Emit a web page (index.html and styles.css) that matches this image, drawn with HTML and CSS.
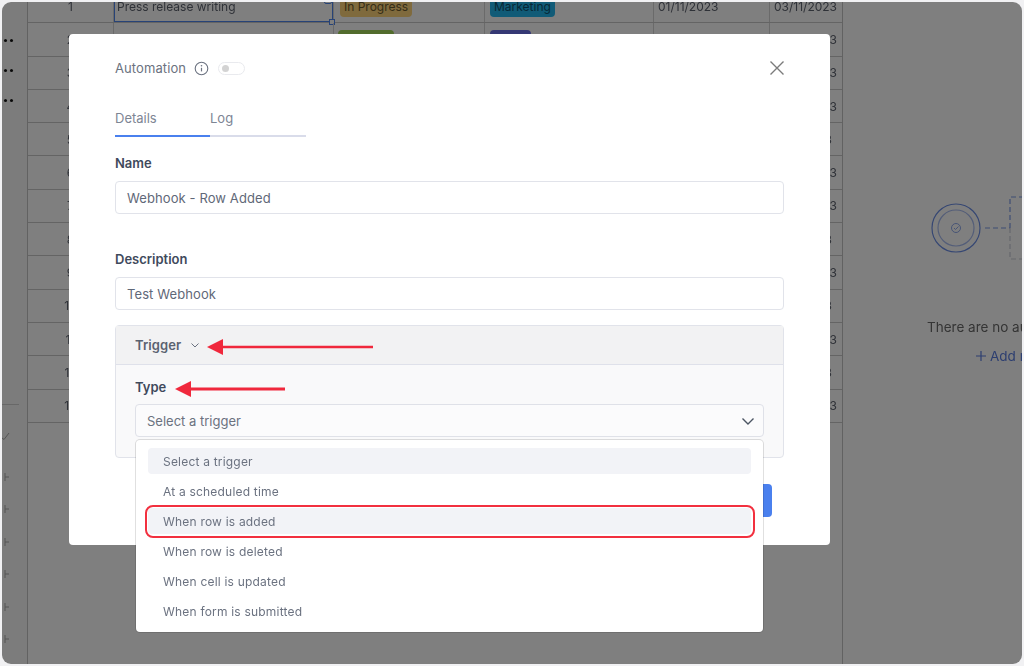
FILE: index.html
```html
<!DOCTYPE html>
<html lang="en">
<head>
<meta charset="utf-8">
<title>Automation</title>
<link rel="stylesheet" href="styles.css">
</head>
<body>
<div class="window">
  <aside class="sidebar">
    <div class="dots"><i></i><i></i></div>
    <div class="dots"><i></i><i></i></div>
    <div class="dots"><i></i><i></i></div>
    <div class="side-line"></div>
    <svg class="side-check" width="8" height="8" viewBox="0 0 8 8"><path d="M0 6l2 1.5L7 1" fill="none" stroke="#aaa" stroke-width="1"/></svg>
    <div class="side-tools">
      <svg width="8" height="8" viewBox="0 0 8 8"><path d="M3 0v8M3 4h4" stroke="#aaa" stroke-width="1" fill="none"/></svg>
      <svg width="8" height="8" viewBox="0 0 8 8"><path d="M3 0v8M3 4h4" stroke="#aaa" stroke-width="1" fill="none"/></svg>
      <svg width="8" height="8" viewBox="0 0 8 8"><path d="M3 0v8M3 4h4" stroke="#aaa" stroke-width="1" fill="none"/></svg>
      <svg width="8" height="8" viewBox="0 0 8 8"><path d="M3 0v8M3 4h4" stroke="#aaa" stroke-width="1" fill="none"/></svg>
      <svg width="8" height="8" viewBox="0 0 8 8"><path d="M3 0v8M3 4h4" stroke="#aaa" stroke-width="1" fill="none"/></svg>
      <svg width="8" height="8" viewBox="0 0 8 8"><path d="M3 0v8M3 4h4" stroke="#aaa" stroke-width="1" fill="none"/></svg>
    </div>
  </aside>

  <main class="sheet">
    <div class="row">
      <div class="cell num">1</div>
      <div class="cell name selected">Press release writing<i class="handle"></i><i class="handle-top"></i></div>
      <div class="cell"><span class="pill tan">In Progress</span></div>
      <div class="cell"><span class="pill cyan">Marketing</span></div>
      <div class="cell">01/11/2023</div>
      <div class="cell">03/11/2023</div>
    </div>
    <div class="row">
      <div class="cell num">2</div><div class="cell name"></div>
      <div class="cell"><span class="pill green">On Hold</span></div>
      <div class="cell"><span class="pill violet">Sales</span></div>
      <div class="cell">01/11/2023</div><div class="cell">05/11/2023</div>
    </div>
    <div class="row"><div class="cell num">3</div><div class="cell name"></div><div class="cell"></div><div class="cell"></div><div class="cell">01/11/2023</div><div class="cell">03/11/2023</div></div>
    <div class="row"><div class="cell num">4</div><div class="cell name"></div><div class="cell"></div><div class="cell"></div><div class="cell">01/11/2023</div><div class="cell">03/11/2023</div></div>
    <div class="row"><div class="cell num">5</div><div class="cell name"></div><div class="cell"></div><div class="cell"></div><div class="cell">01/11/2023</div><div class="cell">11/11/2023</div></div>
    <div class="row"><div class="cell num">6</div><div class="cell name"></div><div class="cell"></div><div class="cell"></div><div class="cell">01/11/2023</div><div class="cell">03/11/2023</div></div>
    <div class="row"><div class="cell num">7</div><div class="cell name"></div><div class="cell"></div><div class="cell"></div><div class="cell">01/11/2023</div><div class="cell">03/11/2023</div></div>
    <div class="row"><div class="cell num">8</div><div class="cell name"></div><div class="cell"></div><div class="cell"></div><div class="cell">01/11/2023</div><div class="cell">11/11/2023</div></div>
    <div class="row"><div class="cell num">9</div><div class="cell name"></div><div class="cell"></div><div class="cell"></div><div class="cell">01/11/2023</div><div class="cell">03/11/2023</div></div>
    <div class="row"><div class="cell num">10</div><div class="cell name"></div><div class="cell"></div><div class="cell"></div><div class="cell">01/11/2023</div><div class="cell">11/11/2023</div></div>
    <div class="row"><div class="cell num">11</div><div class="cell name"></div><div class="cell"></div><div class="cell"></div><div class="cell">01/11/2023</div><div class="cell">03/11/2023</div></div>
    <div class="row"><div class="cell num">12</div><div class="cell name"></div><div class="cell"></div><div class="cell"></div><div class="cell">01/11/2023</div><div class="cell">11/11/2023</div></div>
    <div class="row"><div class="cell num">13</div><div class="cell name"></div><div class="cell"></div><div class="cell"></div><div class="cell">01/11/2023</div><div class="cell">03/11/2023</div></div>
  </main>

  <section class="panel">
    <svg class="panel-art" width="180" height="68" viewBox="0 0 180 68">
      <circle cx="114" cy="33" r="24" fill="none" stroke="#6d8fe6" stroke-width="1.2"/>
      <circle cx="114" cy="33" r="18" fill="none" stroke="#a9bcf0" stroke-width="1.2"/>
      <circle cx="114" cy="33" r="4.5" fill="none" stroke="#8fa8ec" stroke-width="1"/>
      <path d="M112 33l1.5 1.5 3-3" fill="none" stroke="#8fa8ec" stroke-width="1"/>
      <path d="M143 33h25" fill="none" stroke="#7d9ae8" stroke-width="1.2" stroke-dasharray="5 3"/>
      <path d="M168 33V2h12" fill="none" stroke="#7d9ae8" stroke-width="1.2" stroke-dasharray="5 3"/>
      <path d="M168 33v31h12" fill="none" stroke="#c9cdd8" stroke-width="1.2" stroke-dasharray="5 3"/>
    </svg>
    <p class="panel-text">There are no automations</p>
    <p class="panel-add"><svg width="10" height="10" viewBox="0 0 10 10"><path d="M5 0v10M0 5h10" stroke="#5a7de0" stroke-width="1.2" fill="none"/></svg><span>Add new automation</span></p>
  </section>

  <div class="overlay">
    <div class="modal">
      <header class="modal-head">
        <span class="modal-title">Automation</span>
        <svg class="info" width="15" height="15" viewBox="0 0 15 15"><circle cx="7.5" cy="7.5" r="6.3" fill="none" stroke="#6b7280" stroke-width="1.1"/><path d="M7.5 6.8v3.6" stroke="#6b7280" stroke-width="1.2"/><circle cx="7.5" cy="4.8" r=".8" fill="#6b7280"/></svg>
        <span class="toggle"><i></i></span>
        <svg class="close" width="16" height="16" viewBox="0 0 16 16"><path d="M1.5 1.5l13 13M14.5 1.5l-13 13" stroke="#7b7b7b" stroke-width="1.4" fill="none"/></svg>
      </header>

      <nav class="tabs">
        <span class="tab active">Details</span>
        <span class="tab">Log</span>
      </nav>

      <label class="label label-name">Name</label>
      <div class="input">Webhook - Row Added</div>

      <label class="label label-desc">Description</label>
      <div class="input">Test Webhook</div>

      <section class="trigger">
        <div class="trigger-head">
          <span>Trigger</span>
          <svg width="10" height="10" viewBox="0 0 10 10"><path d="M1.5 3.5L5 7l3.5-3.5" fill="none" stroke="#6b7280" stroke-width="1"/></svg>
          <svg class="arrow arrow-a" width="166" height="18" viewBox="0 0 166 18"><path d="M0 9L16 1v6.7h150v2.6H16V17z" fill="#f0283c"/></svg>
        </div>
        <div class="trigger-body">
          <label class="label label-type">Type</label>
          <svg class="arrow arrow-b" width="110" height="18" viewBox="0 0 110 18"><path d="M0 9L16 1v6.6h94v2.8H16V17z" fill="#f0283c"/></svg>
          <div class="select">
            <span>Select a trigger</span>
            <svg width="14" height="14" viewBox="0 0 14 14"><path d="M1.5 4.5L7 10l5.5-5.5" fill="none" stroke="#4b5563" stroke-width="1.4"/></svg>
          </div>
          <ul class="menu">
            <li class="item current">Select a trigger</li>
            <li class="item">At a scheduled time</li>
            <li class="item current">When row is added<i class="ring"></i></li>
            <li class="item">When row is deleted</li>
            <li class="item">When cell is updated</li>
            <li class="item">When form is submitted</li>
          </ul>
        </div>
      </section>

      <footer class="modal-foot"><button class="save">Save</button></footer>
    </div>
  </div>
</div>
</body>
</html>
```
FILE: styles.css
```css
* { box-sizing: border-box; }
html, body { height: 100%; }
body {
  margin: 0;
  background: #f1f1f3;
  font-family: Inter, "Liberation Sans", sans-serif;
  overflow: hidden;
}
.window {
  position: relative;
  display: flex;
  width: 1020px;
  height: 662px;
  margin: 2px;
  border-radius: 9px;
  overflow: hidden;
  background: #fff;
  filter: blur(.4px);
}

/* sidebar */
.sidebar {
  flex: 0 0 26px;
  display: flex;
  flex-direction: column;
  border-right: 1px solid #c4c4c4;
  overflow: hidden;
  background: #f8f8f8;
}
.dots {
  display: flex;
  gap: 3px;
  height: 4px;
  margin: 0 0 26px 2px;
}
.dots:first-child { margin-top: 37px; }
.dots i {
  width: 3px;
  height: 3px;
  border-radius: 50%;
  background: #111;
}
.side-line {
  width: 17px;
  height: 1px;
  margin-top: 275px;
  background: #d0d0d0;
}
.side-check { margin: 27px 0 0 0; }
.side-tools {
  display: flex;
  flex-direction: column;
  gap: 24.4px;
  margin-top: 33px;
}

/* table */
.sheet {
  flex: 0 0 815px;
  margin-top: -12px;
  border-right: 1px solid #c4c4c4;
}
.row {
  display: grid;
  grid-template-columns: 86px 220px 151px 169px 116px 72px;
  height: 33.3px;
  border-bottom: 1px solid #c8c8c8;
  font-size: 12px;
  color: #5f6470;
}
.cell {
  display: flex;
  align-items: center;
  position: relative;
  padding-left: 4px;
  border-right: 1px solid #d4d4d4;
  white-space: nowrap;
  overflow: hidden;
}
.cell:last-child { border-right: 0; }
.num { justify-content: center; padding: 0; }
.name { overflow: visible; padding-left: 3px; }
.selected { box-shadow: inset 0 0 0 1px #4f87ee; color: #5f6470; }
.handle, .handle-top {
  position: absolute;
  width: 6px;
  height: 6px;
  border: 1px solid #4f87ee;
  background: #fff;
}
.handle { right: -2px; bottom: -3px; }
.handle-top { right: 1px; top: 8px; width: 8px; border-radius: 2px; }
.pill {
  display: inline-block;
  height: 21px;
  line-height: 21px;
  padding: 0 3px;
  border-radius: 4px;
  margin-left: 2px;
  margin-top: 1px;
}
.tan { background: #ffd57a; color: #6b5a2d; padding: 0 4px; }
.cyan { background: #22b7ee; color: #0f4f6d; padding: 0 4px; margin-left: 1px; }
.green { background: #a5d95a; color: #3b5a12; margin-left: 0; padding: 0 5px; margin-top: 2px; }
.violet { background: #6a70e8; color: #1f2260; margin-left: 1px; padding: 0 5px; margin-top: 2px; }

/* right panel */
.panel {
  flex: 1;
  overflow: hidden;
  white-space: nowrap;
  font-size: 14px;
}
.panel-art { display: block; margin: 193px 0 0 -1px; }
.panel-text {
  margin: 56px 0 0 84px;
  color: #6a6a6a;
  font-size: 13.5px;
}
.panel-add {
  display: flex;
  align-items: center;
  gap: 4px;
  margin: 13px 0 0 133px;
  color: #5a7de0;
  font-size: 13.5px;
}
.panel-add svg { flex: none; }

/* modal */
.overlay {
  position: absolute;
  inset: 0;
  background: rgba(0, 0, 0, .5);
}
.modal {
  width: 761px;
  height: 511px;
  margin: 32px 0 0 67px;
  padding: 0 46px;
  border-radius: 4px;
  background: #fff;
  color: #6b7280;
}
.modal-head {
  display: flex;
  align-items: center;
  height: 16px;
  padding-top: 26px;
  box-sizing: content-box;
  font-size: 13px;
}
.modal-title { letter-spacing: .1px; }
.info { margin-left: 8px; }
.toggle {
  display: flex;
  align-items: center;
  width: 27px;
  height: 13px;
  margin-left: 9px;
  padding-left: 3px;
  border: 1px solid #e9eaee;
  border-radius: 7px;
}
.toggle i {
  width: 7px;
  height: 7px;
  border-radius: 50%;
  background: #d3d3d3;
}
.close { margin-left: auto; margin-right: -1px; }
.tabs {
  display: flex;
  width: 191px;
  height: 27px;
  margin-top: 34px;
  border-bottom: 2px solid #d9dcea;
  font-size: 13px;
}
.tab { color: #7d8594; }
.tab.active {
  width: 95px;
  height: 27px;
  border-bottom: 2px solid #4a80ee;
}
.label {
  display: block;
  height: 18px;
  font-size: 13px;
  font-weight: 600;
  line-height: 18px;
  color: #3f4a5c;
}
.label-name { margin-top: 17px; }
.label-desc { margin-top: 36px; }
.input {
  height: 33px;
  margin-top: 9px;
  padding-left: 11px;
  border: 1px solid #e1e3ea;
  border-radius: 4px;
  font-size: 13px;
  line-height: 33px;
  letter-spacing: .1px;
  color: #5f6878;
}
.trigger {
  height: 133px;
  margin-top: 15px;
  border: 1px solid #e1e3ea;
  border-radius: 4px;
  background: #f9f9fa;
}
.trigger-head {
  position: relative;
  display: flex;
  align-items: center;
  gap: 9px;
  height: 39px;
  padding-left: 19px;
  border-bottom: 1px solid #dfe1ea;
  background: #f2f2f3;
  font-size: 13px;
  font-weight: 600;
  letter-spacing: .1px;
  color: #5a6270;
}
.arrow { position: absolute; }
.arrow-a { left: 91px; top: 12px; }
.trigger-body { position: relative; padding: 13px 19px 0; }
.arrow-b { left: 59px; top: 15px; }
.label-type { height: 18px; }
.select {
  display: flex;
  align-items: center;
  justify-content: space-between;
  height: 33px;
  margin-top: 8px;
  padding: 0 8px 0 11px;
  border: 1px solid #dfe1e8;
  border-radius: 4px;
  background: #fbfbfc;
  font-size: 13px;
  color: #6b7280;
}
.menu {
  position: absolute;
  z-index: 2;
  left: 20px;
  top: 75px;
  width: 627px;
  height: 192px;
  margin: 0;
  padding: 8px 12px;
  list-style: none;
  border-radius: 4px;
  background: #fff;
  box-shadow: 0 0 0 1px rgba(0, 0, 0, .12);
  font-size: 12px;
  color: #6b7280;
}
.item {
  position: relative;
  height: 26px;
  margin-bottom: 4px;
  padding-left: 15px;
  line-height: 28px;
  letter-spacing: .2px;
  border-radius: 4px;
}
.current { background: #f2f3f7; }
.ring {
  position: absolute;
  inset: -3px -4px -4px -3px;
  border: 2.5px solid #f2303f;
  border-radius: 8px;
}
.modal-foot {
  display: flex;
  justify-content: flex-end;
  margin-top: 26px;
  padding-right: 12px;
}
.save {
  width: 80px;
  height: 33px;
  border: 0;
  border-radius: 4px;
  background: #4a80ee;
  color: #fff;
  font: 600 13px Inter, sans-serif;
}
```
